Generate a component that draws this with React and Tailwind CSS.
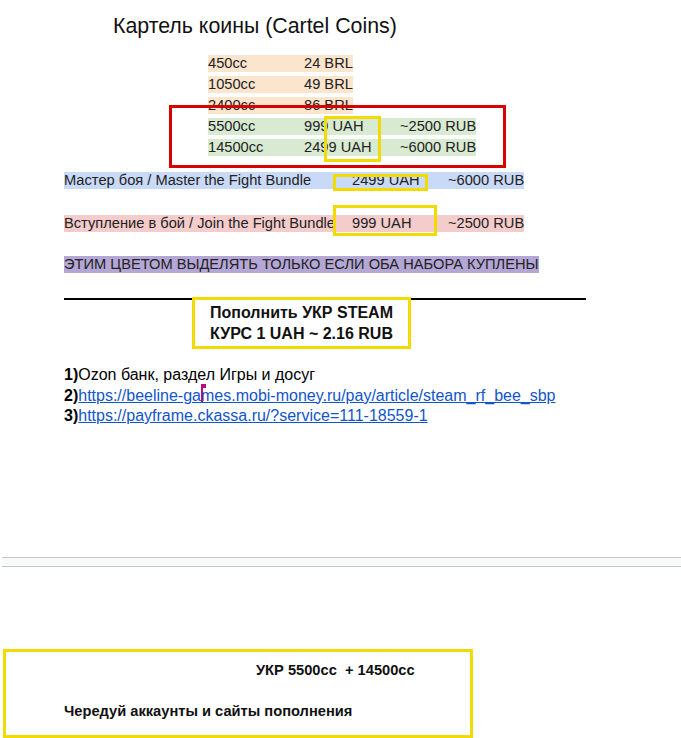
export default function App() {
  const font = "font-['Liberation_Sans',Arial,sans-serif]";
  return (
    <div className={`relative w-[681px] h-[738px] overflow-hidden bg-white text-black ${font}`}>
      {/* Page 1 */}
      <div className="relative h-[557px]">
        <div className="pl-[113px] pt-[14px] text-[21.33px] leading-[25px] text-[#111]">
          Картель коины (Cartel Coins)
        </div>

        <div className="mt-[16px] pl-[208px] flex flex-col gap-[4px] text-[14.67px] leading-[17px] text-[#222]">
          {[
            ["450cc", "24 BRL"],
            ["1050cc", "49 BRL"],
            ["2400cc", "86 BRL"],
          ].map(([a, b]) => (
            <div key={a} className="flex h-[17px]">
              <div className="flex bg-[#fce5cd]">
                <span className="w-[96px]">{a}</span>
                <span>{b}</span>
              </div>
            </div>
          ))}
          {[
            ["5500cc", "999 UAH", "~2500 RUB"],
            ["14500cc", "2499 UAH", "~6000 RUB"],
          ].map(([a, b, c]) => (
            <div key={a} className="flex h-[17px]">
              <div className="flex bg-[#d9ead3]">
                <span className="w-[96px]">{a}</span>
                <span className="w-[96px]">{b}</span>
                <span>{c}</span>
              </div>
            </div>
          ))}
        </div>

        <div className="mt-[16px] pl-[64px] flex h-[17px] text-[14.67px] leading-[17px] text-[#222]">
          <div className="flex bg-[#c9daf8]">
            <span className="w-[288px]">Мастер боя / Master the Fight Bundle</span>
            <span className="w-[96px]">2499 UAH</span>
            <span>~6000 RUB</span>
          </div>
        </div>

        <div className="mt-[26px] pl-[64px] flex h-[17px] text-[14.67px] leading-[17px] text-[#222]">
          <div className="flex bg-[#f4cccc]">
            <span className="w-[288px] whitespace-nowrap overflow-hidden">Вступление в бой / Join the Fight Bundle</span>
            <span className="w-[96px]">999 UAH</span>
            <span>~2500 RUB</span>
          </div>
        </div>

        <div className="mt-[24px] pl-[64px] flex h-[17px] text-[14.67px] leading-[17px] text-[#222]">
          <div className="bg-[#b4a7d6]">ЭТИМ ЦВЕТОМ ВЫДЕЛЯТЬ ТОЛЬКО ЕСЛИ ОБА НАБОРА КУПЛЕНЫ</div>
        </div>

        <div className="mt-[25px] ml-[64px] w-[522px] h-[2px] bg-black" />

        <div className="mt-[65px] pl-[64px] text-[16px] leading-[20.5px]">
          <div>
            <b>1)</b>Ozon банк, раздел Игры и досуг
          </div>
          <div>
            <b>2)</b>
            <span className="text-[#1155cc] underline">https://beeline-games.mobi-money.ru/pay/article/steam_rf_bee_sbp</span>
          </div>
          <div>
            <b>3)</b>
            <span className="text-[#1155cc] underline">https://payframe.ckassa.ru/?service=111-18559-1</span>
          </div>
        </div>

        {/* drawn shapes */}
        <div className="absolute left-[169px] top-[105px] w-[337px] h-[63px] border-[3px] border-[#d60000]" />
        <div className="absolute left-[324px] top-[116px] w-[57px] h-[46px] border-[3px] border-[#f2db00]" />
        <div className="absolute left-[333px] top-[174px] w-[95px] h-[17px] border-[3px] border-[#f2db00]" />
        <div className="absolute left-[333px] top-[205px] w-[104px] h-[31px] border-[3px] border-[#f2db00]" />
        <div className="absolute left-[192px] top-[297px] w-[219px] h-[52px] border-[3px] border-[#f2db00] bg-white flex flex-col items-center justify-center text-[16px] leading-[21px] font-bold text-[#111]">
          <div>Пополнить УКР STEAM</div>
          <div>КУРС 1 UAH ~ 2.16 RUB</div>
        </div>

        {/* collaborator cursor */}
        <div className="absolute left-[201px] top-[384px] w-[2px] h-[18px] bg-[#b0107f]" />
        <div className="absolute left-[201px] top-[384px] w-[5px] h-[4px] bg-[#b0107f]" />
      </div>

      {/* page break */}
      <div className="ml-[2px] h-[10px] border-y border-[#c4c4c4] bg-[#f8f9fa]" />

      {/* Page 2 */}
      <div className="mt-[82px] ml-[3px] w-[470px] h-[89px] border-[3px] border-[#f2db00] text-[14.67px] leading-[17px] font-bold text-[#111]">
        <div className="pt-[10px] pl-[250px] whitespace-pre">УКР 5500cc  + 14500cc</div>
        <div className="mt-[24px] pl-[58px]">Чередуй аккаунты и сайты пополнения</div>
      </div>
    </div>
  );
}
